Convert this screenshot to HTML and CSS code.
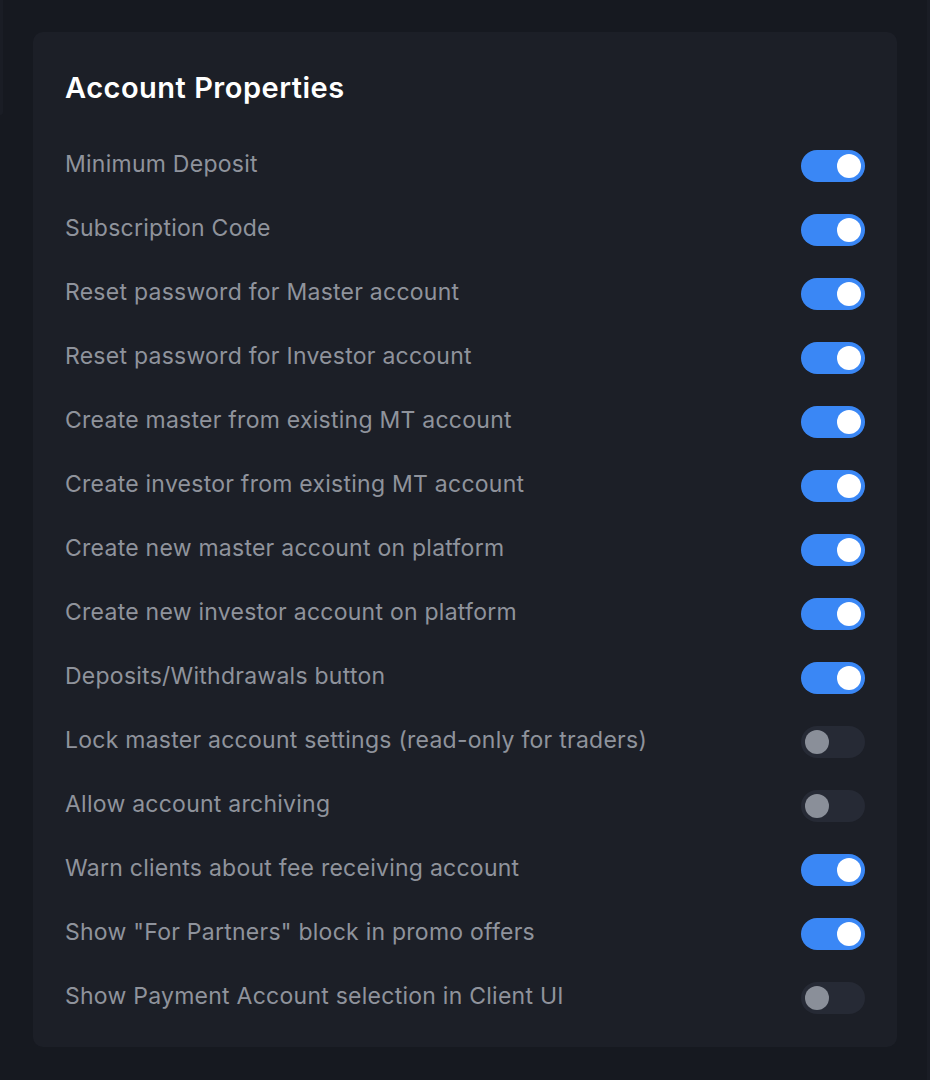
FILE: index.html
```html
<!DOCTYPE html>
<html lang="en">
<head>
<meta charset="utf-8">
<title>Account Properties</title>
<link rel="stylesheet" href="styles.css">
</head>
<body>
<div class="page">
  <div class="side-left"></div>
  <section class="card">
    <h2 class="card-title">Account Properties</h2>
    <ul class="props">
      <li class="prop"><span class="label">Minimum Deposit</span><span class="toggle on"><span class="knob"></span></span></li>
      <li class="prop"><span class="label">Subscription Code</span><span class="toggle on"><span class="knob"></span></span></li>
      <li class="prop"><span class="label">Reset password for Master account</span><span class="toggle on"><span class="knob"></span></span></li>
      <li class="prop"><span class="label">Reset password for Investor account</span><span class="toggle on"><span class="knob"></span></span></li>
      <li class="prop"><span class="label">Create master from existing MT account</span><span class="toggle on"><span class="knob"></span></span></li>
      <li class="prop"><span class="label">Create investor from existing MT account</span><span class="toggle on"><span class="knob"></span></span></li>
      <li class="prop"><span class="label">Create new master account on platform</span><span class="toggle on"><span class="knob"></span></span></li>
      <li class="prop"><span class="label">Create new investor account on platform</span><span class="toggle on"><span class="knob"></span></span></li>
      <li class="prop"><span class="label">Deposits/Withdrawals button</span><span class="toggle on"><span class="knob"></span></span></li>
      <li class="prop"><span class="label">Lock master account settings (read-only for traders)</span><span class="toggle"><span class="knob"></span></span></li>
      <li class="prop"><span class="label">Allow account archiving</span><span class="toggle"><span class="knob"></span></span></li>
      <li class="prop"><span class="label">Warn clients about fee receiving account</span><span class="toggle on"><span class="knob"></span></span></li>
      <li class="prop"><span class="label">Show "For Partners" block in promo offers</span><span class="toggle on"><span class="knob"></span></span></li>
      <li class="prop"><span class="label">Show Payment Account selection in Client UI</span><span class="toggle"><span class="knob"></span></span></li>
    </ul>
  </section>
  <div class="side-right"></div>
</div>
</body>
</html>
```

FILE: styles.css
```css
* { box-sizing: border-box; }
html, body {
  margin: 0;
  padding: 0;
  background: #161920;
  font-family: Inter, Roboto, "Noto Sans", sans-serif;
}
.page {
  display: flex;
  align-items: flex-start;
  height: 1080px;
  padding-top: 32px;
}
.side-left {
  width: 3px;
  height: 115px;
  margin-top: -32px;
  margin-right: 30px;
  background: #1a1d25;
  border-bottom-right-radius: 4px;
}
.card {
  width: 864px;
  background: #1c1f27;
  border-radius: 10px;
  padding: 34px 32px 33px 32px;
}
.side-right {
  margin-left: 30px;
  margin-top: -32px;
  width: 3px;
  height: 1080px;
  background: #1a1d25;
}
.card-title {
  margin: 0 0 40px 0;
  font-size: 29px;
  line-height: 44px;
  font-weight: 600;
  letter-spacing: 0.5px;
  color: #ffffff;
}
.props {
  list-style: none;
  margin: 0;
  padding: 0;
  display: flex;
  flex-direction: column;
  gap: 32px;
}
.prop {
  display: flex;
  align-items: center;
  justify-content: space-between;
  height: 32px;
}
.label {
  font-size: 23px;
  line-height: 32px;
  letter-spacing: 0.25px;
  margin-bottom: 4px;
  color: #8f939c;
}
.toggle {
  width: 64px;
  height: 32px;
  border-radius: 16px;
  background: #262a35;
  padding: 4px;
  display: flex;
  justify-content: flex-start;
}
.toggle .knob {
  width: 24px;
  height: 24px;
  border-radius: 50%;
  background: #8a8f99;
}
.toggle.on {
  background: #3a87f5;
  justify-content: flex-end;
}
.toggle.on .knob {
  background: #ffffff;
}
```
